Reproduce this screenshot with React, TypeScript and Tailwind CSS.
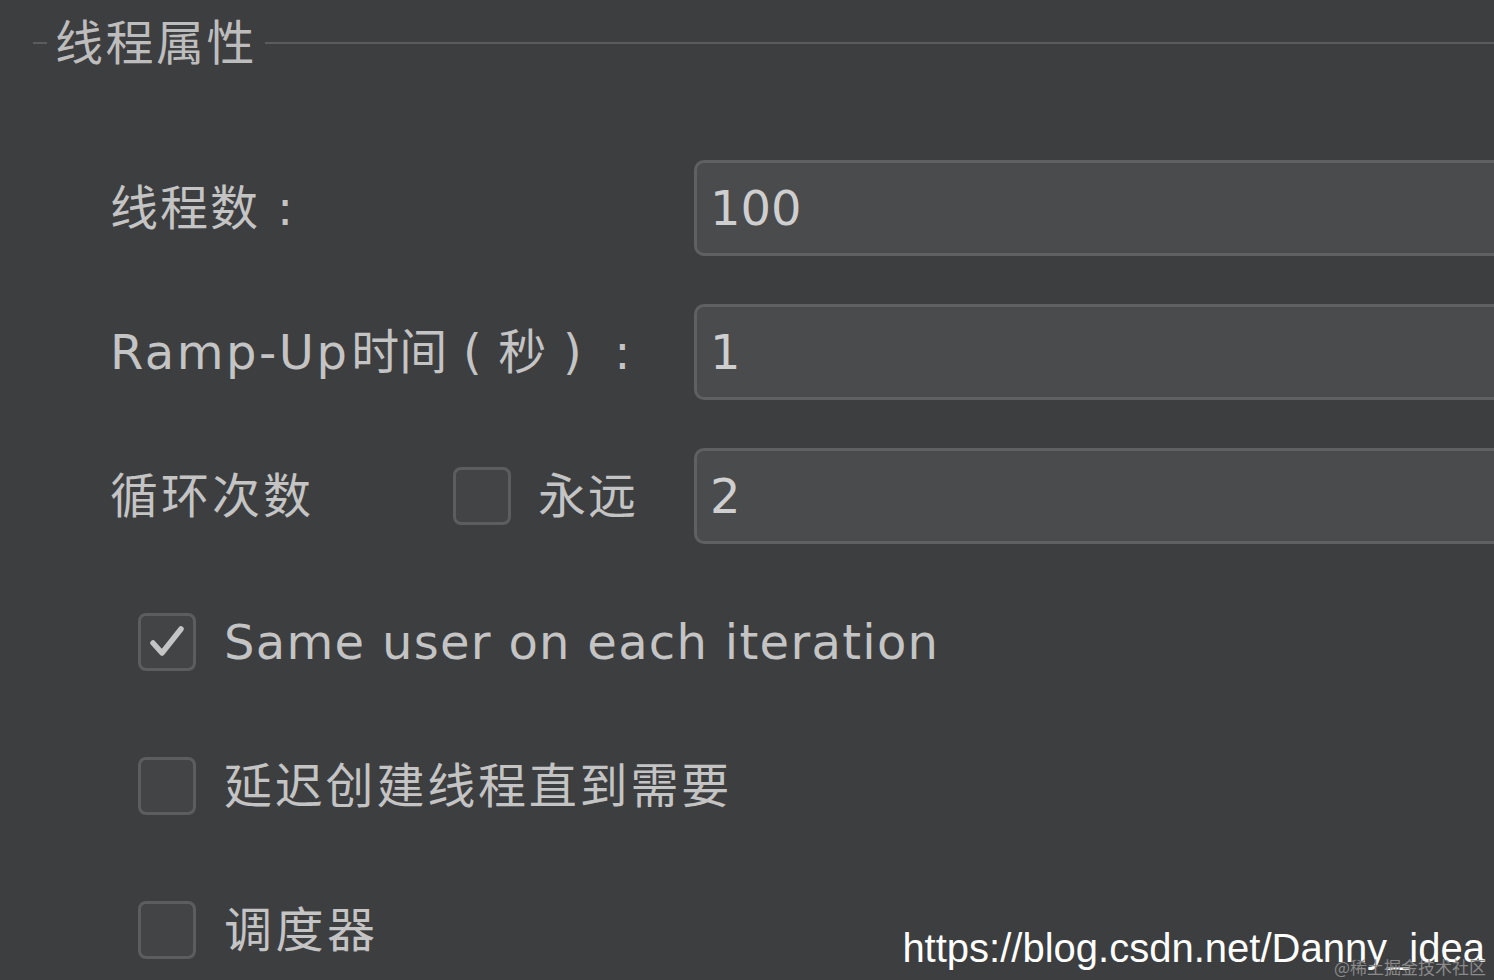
import React from 'react';

const font = { fontFamily: '"DejaVu Sans", "Noto Sans CJK SC", sans-serif' };

const Box: React.FC<{ checked?: boolean }> = ({ checked }) => (
  <div className="w-[58px] h-[58px] shrink-0 rounded-[8px] border-[3px] border-[#5c5d5f] bg-[#434446] flex items-center justify-center">
    {checked && (
      <svg width="42" height="42" viewBox="0 0 42 42">
        <polyline points="7,22 16,32 35,8" fill="none" stroke="#c4c4c4" strokeWidth="5.5" strokeLinecap="round" strokeLinejoin="round" />
      </svg>
    )}
  </div>
);

const Field: React.FC<{ value: string }> = ({ value }) => (
  <div className="w-[840px] h-[96px] shrink-0 rounded-[10px] border-[3px] border-[#5f6062] bg-[#4a4b4d] flex items-center pl-[13px] text-[48px] text-[#cfcfcf]">
    {value}
  </div>
);

// half-width punctuation centred in a full-width cell
const Cell: React.FC<{ children: React.ReactNode }> = ({ children }) => (
  <span className="inline-block w-[50px] text-center">{children}</span>
);

export default function App() {
  return (
    <div className="relative w-[1494px] h-[980px] overflow-hidden bg-[#3d3e40] text-[#c4c4c4]" style={font}>
      <div className="flex items-center h-[86px]">
        <div className="ml-[33px] w-[14px] h-[2px] bg-[#5a5b5d]" />
        <div className="px-[8px] text-[48px] leading-none tracking-[2.5px] text-[#bdbdbd]">线程属性</div>
        <div className="flex-1 h-[2px] bg-[#5a5b5d]" />
      </div>

      <div className="mt-[74px] flex flex-col gap-[48px]">
        <div className="flex items-center h-[96px]">
          <div className="w-[694px] shrink-0 pl-[110px] text-[48px] leading-none flex items-center">
            <span className="tracking-[2px]">线程数</span>
            <Cell>:</Cell>
          </div>
          <Field value="100" />
        </div>
        <div className="flex items-center h-[96px]">
          <div className="w-[694px] shrink-0 pl-[110px] text-[48px] leading-none flex items-center">
            <span className="tracking-[2.5px]">Ramp-Up</span>
            <span className="ml-[2px]">时间</span>
            <Cell>(</Cell>
            <Cell>秒</Cell>
            <Cell>)</Cell>
            <Cell>:</Cell>
          </div>
          <Field value="1" />
        </div>
        <div className="flex items-center h-[96px]">
          <div className="w-[694px] shrink-0 pl-[110px] flex items-center text-[48px] leading-none">
            <span className="w-[210px] tracking-[3px]">循环次数</span>
            <div className="ml-[133px]">
              <Box />
            </div>
            <span className="ml-[27px] tracking-[2px]">永远</span>
          </div>
          <Field value="2" />
        </div>
      </div>

      <div className="mt-[50px] flex flex-col gap-[48px]">
        {[
          { label: 'Same user on each iteration', checked: true, cls: 'tracking-[1.3px]' },
          { label: '延迟创建线程直到需要', checked: false, cls: 'tracking-[2.8px]' },
          { label: '调度器', checked: false, cls: 'tracking-[3.5px]' },
        ].map((row) => (
          <div key={row.label} className="flex items-center h-[96px] pl-[138px]">
            <Box checked={row.checked} />
            <span className={`ml-[28px] text-[48px] leading-none ${row.cls}`}>{row.label}</span>
          </div>
        ))}
      </div>

      <div
        className="absolute right-[9px] bottom-[12px] text-[40px] leading-none text-white"
        style={{ fontFamily: '"Liberation Sans", Arial, sans-serif' }}
      >
        https://blog.csdn.net/Danny_idea
      </div>
      <div
        className="absolute right-[8px] bottom-[5px] text-[17px] leading-none text-[#8a8a8a]"
        style={{ fontFamily: '"Noto Sans CJK SC", sans-serif' }}
      >
        @稀土掘金技术社区
      </div>
    </div>
  );
}
